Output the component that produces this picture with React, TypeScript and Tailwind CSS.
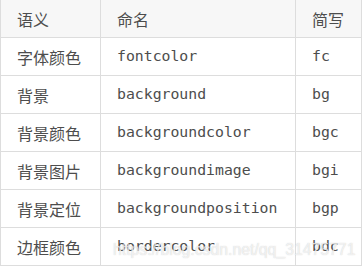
const rows = [
  ["字体颜色", "fontcolor", "fc"],
  ["背景", "background", "bg"],
  ["背景颜色", "backgroundcolor", "bgc"],
  ["背景图片", "backgroundimage", "bgi"],
  ["背景定位", "backgroundposition", "bgp"],
  ["边框颜色", "bordercolor", "bdc"],
];

const cjk = { fontFamily: '"Noto Sans CJK SC", "Noto Sans", sans-serif' };
const mono = { fontFamily: '"DejaVu Sans Mono", "Noto Sans CJK SC", monospace' };

export default function App() {
  return (
    <div className="relative w-[364px] h-[269px] bg-white text-[#4d4d4d] overflow-hidden">
      <div className="w-[362px] border-x border-[#dddddd]">
        <div className="flex h-[38px] border-b border-[#dddddd] bg-[#f7f7f7] text-[16px]" style={cjk}>
          <div className="w-[100px] border-r border-[#dddddd] flex items-center pl-4">语义</div>
          <div className="w-[195px] border-r border-[#dddddd] flex items-center pl-4">命名</div>
          <div className="w-[65px] flex items-center pl-4">简写</div>
        </div>
        {rows.map(([name, full, short]) => (
          <div key={full} className="flex h-[38px] border-b border-[#dddddd]">
            <div className="w-[100px] border-r border-[#dddddd] flex items-center pl-4 text-[16px]" style={cjk}>
              {name}
            </div>
            <div className="w-[195px] border-r border-[#dddddd] flex items-center pl-4 text-[14.8px]" style={mono}>
              {full}
            </div>
            <div className="w-[65px] flex items-center pl-4 text-[14.8px]" style={mono}>
              {short}
            </div>
          </div>
        ))}
      </div>
      <div
        className="absolute left-[113px] top-[238px] text-[15.8px] text-white/70 whitespace-nowrap pointer-events-none"
        style={{ fontFamily: '"Liberation Sans", Arial, sans-serif', textShadow: "0 0 1px rgba(150,150,150,0.5)" }}
      >
        https://blog.csdn.net/qq_31475771
      </div>
    </div>
  );
}
